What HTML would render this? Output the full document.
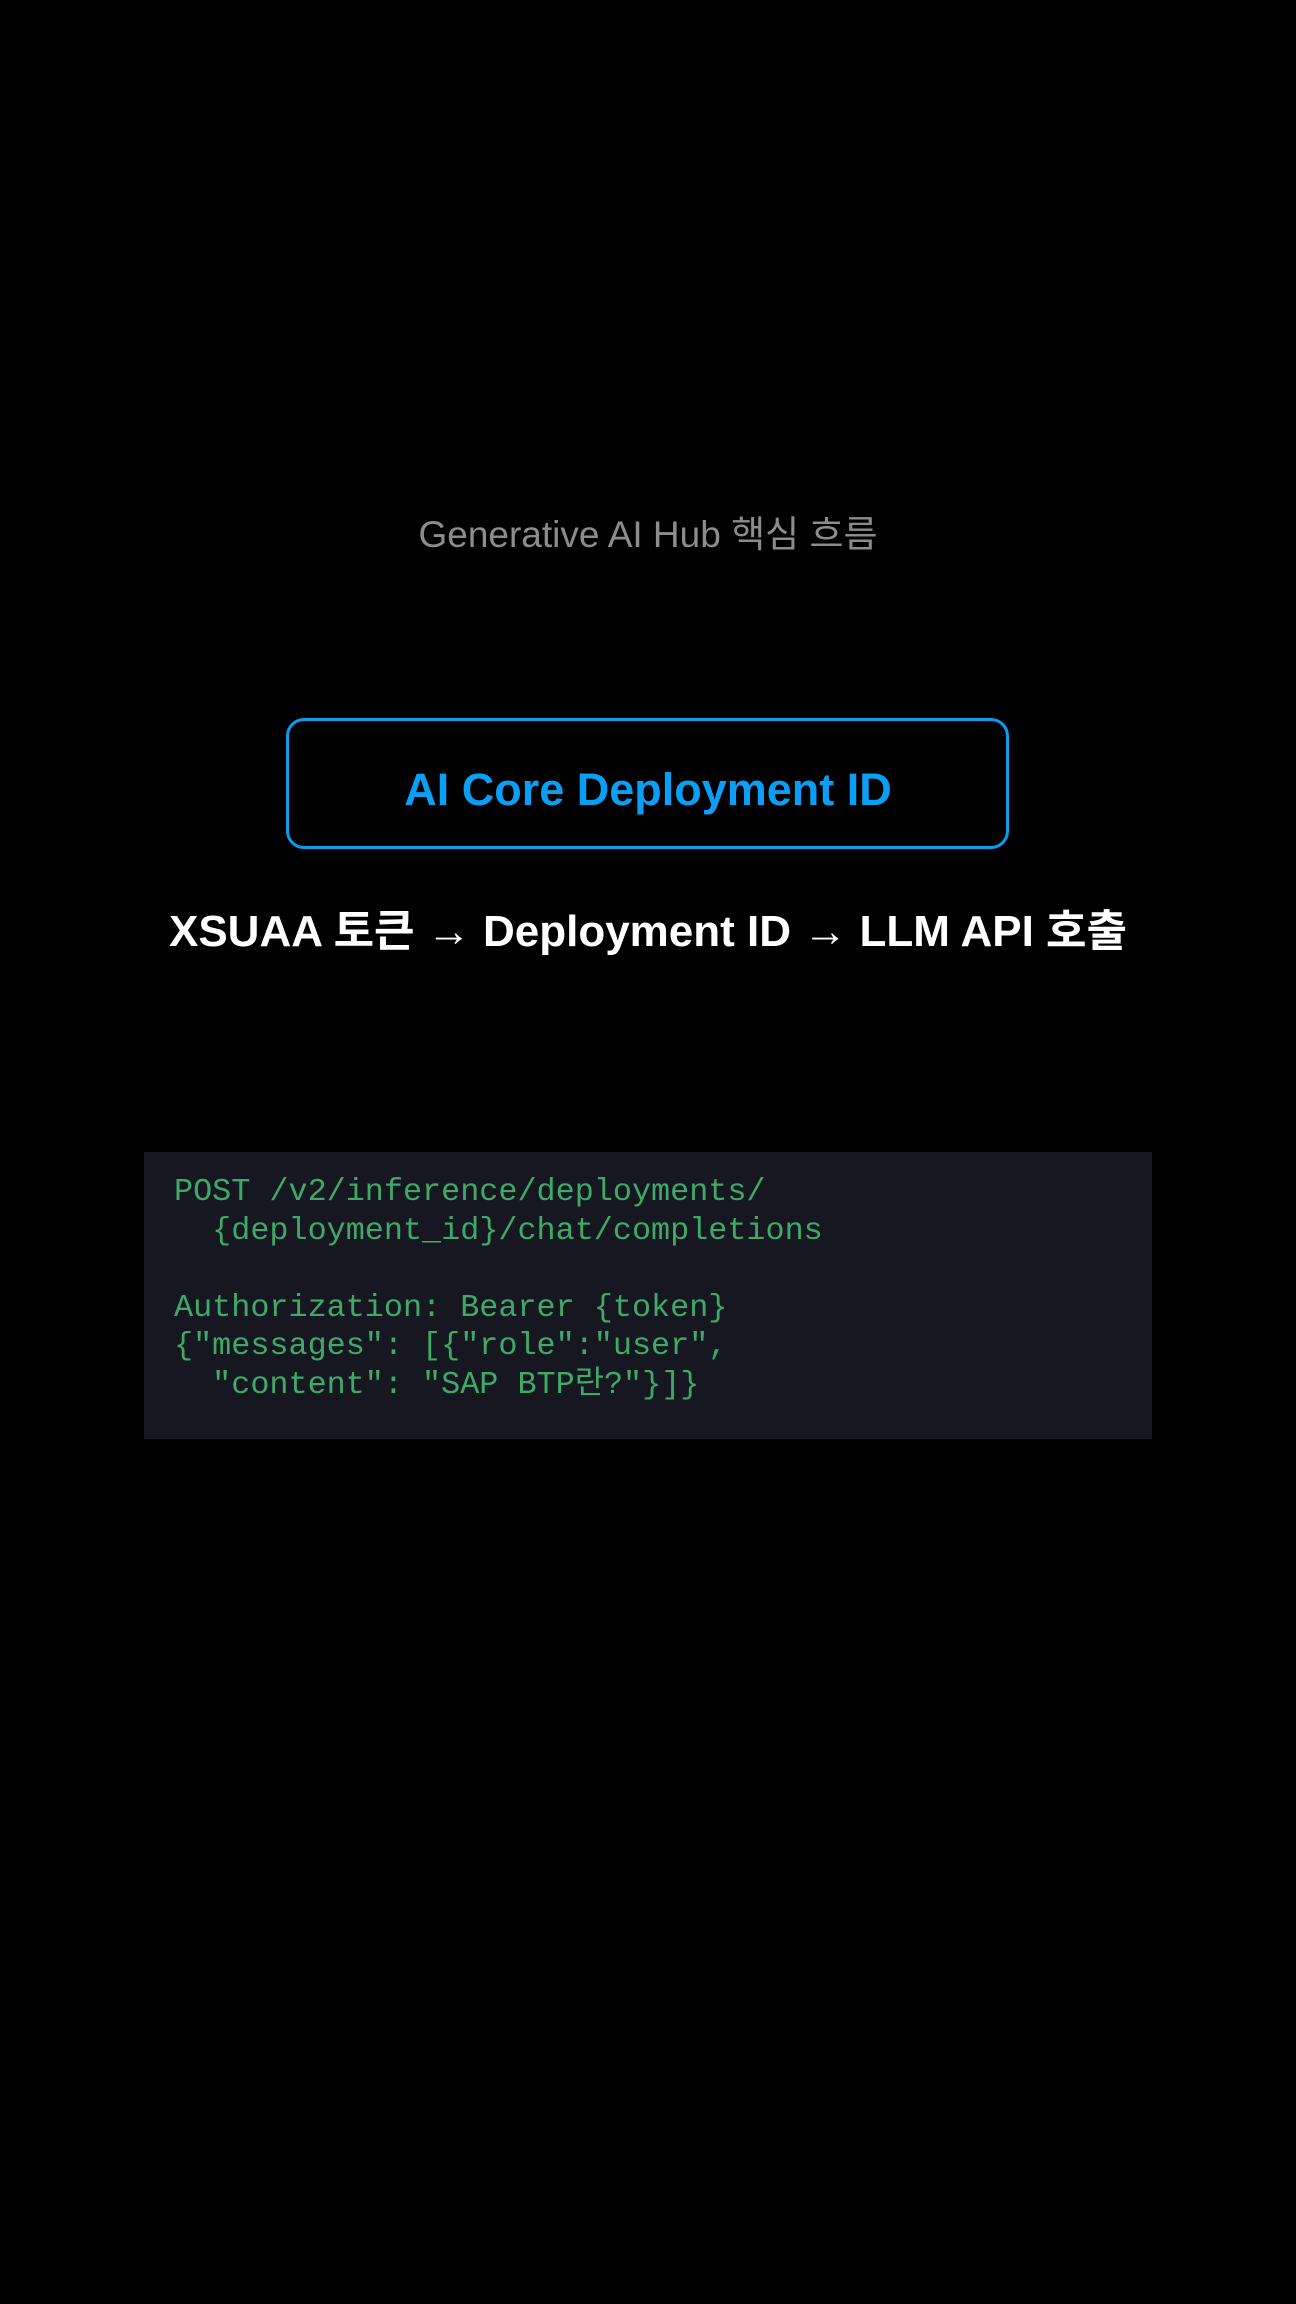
<!DOCTYPE html>
<html><head><meta charset="utf-8"><style>
html,body{margin:0;padding:0;background:#000;width:1296px;height:2304px;overflow:hidden}
body{position:relative;font-family:"Liberation Sans","Noto Sans CJK KR",sans-serif}
.t{position:absolute;left:0;width:1296px;text-align:center;white-space:nowrap}
.box{position:absolute;left:286px;top:718px;width:717px;height:125px;border:3px solid #0a9cf0;border-radius:18px;}
.code{position:absolute;left:144px;top:1152px;width:1008px;height:287px;background:#161720}
pre{position:absolute;left:30px;top:21px;margin:0;font-family:"Liberation Mono","Noto Sans CJK KR",monospace;font-size:31.8px;line-height:38.5px;color:#3fa968}
</style></head><body>
<div class="t" style="top:511px;font-size:37px;color:#8c8c8c;line-height:48px">Generative AI Hub 핵심 흐름</div>
<div class="box"></div>
<div class="t" style="top:762px;font-size:45px;font-weight:bold;color:#0a9ff5;line-height:56px">AI Core Deployment ID</div>
<div class="t" style="top:904px;font-size:44px;font-weight:bold;color:#fff;line-height:56px">XSUAA 토큰 → Deployment ID → LLM API 호출</div>
<div class="code"><pre>POST /v2/inference/deployments/
  {deployment_id}/chat/completions

Authorization: Bearer {token}
{"messages": [{"role":"user",
  "content": "SAP BTP란?"}]}</pre></div>
</body></html>
